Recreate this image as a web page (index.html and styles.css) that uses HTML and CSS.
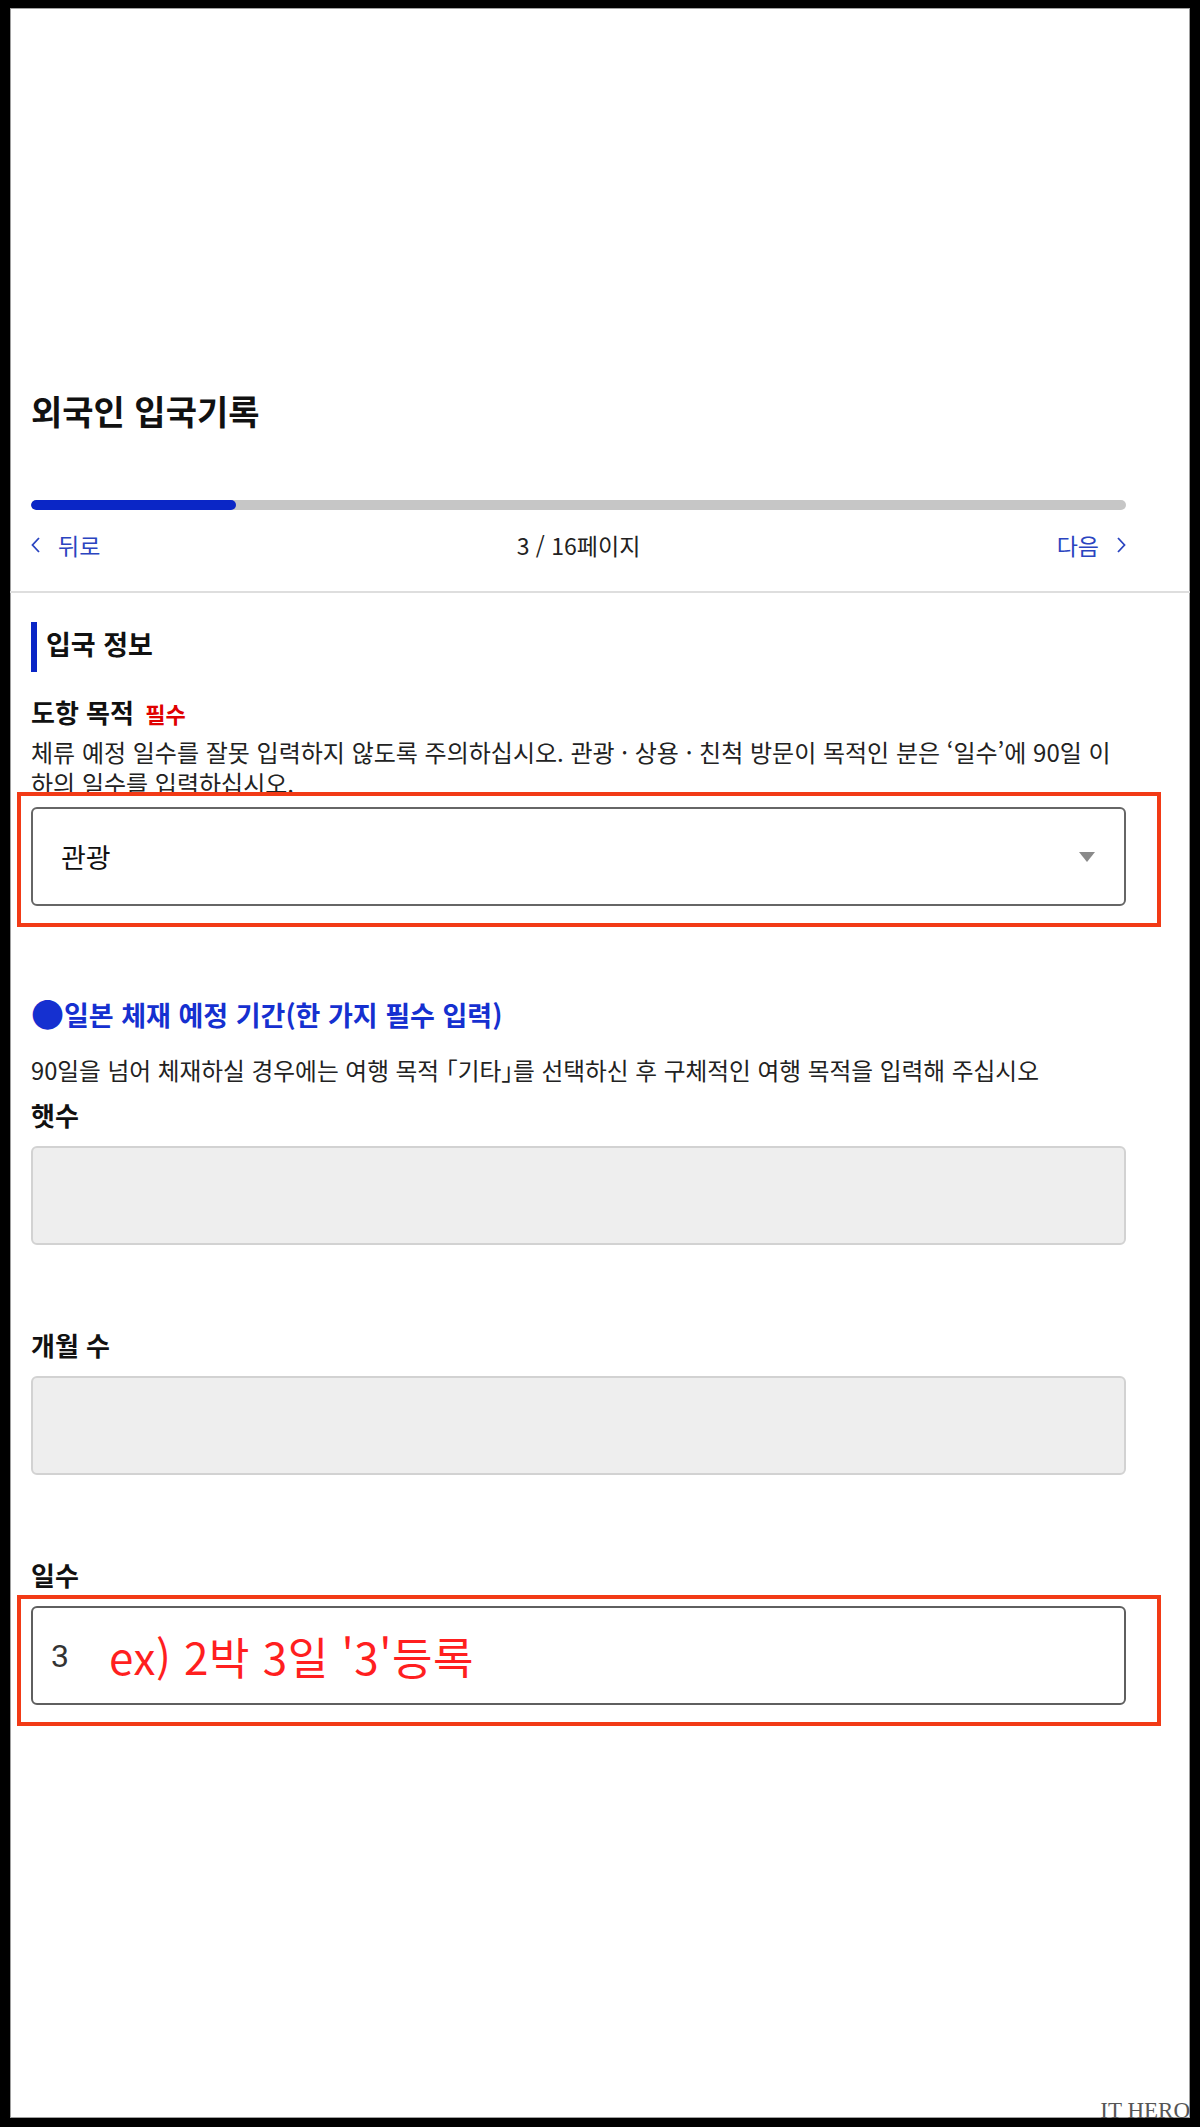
FILE: index.html
```html
<!DOCTYPE html>
<html lang="ko">
<head>
<meta charset="UTF-8">
<meta name="viewport" content="width=device-width, initial-scale=1.0">
<title>외국인 입국기록</title>
<link rel="stylesheet" href="styles.css">
</head>
<body>

<div class="screen">
    <header class="page-head">
        <h1 class="page-title">외국인 입국기록</h1>
        <div class="progress"><div class="progress-bar" style="width: 18.75%"></div></div>
        <nav class="pager">
            <a class="pager-link" href="#">
                <svg width="9" height="16" viewBox="0 0 9 16"><path d="M8 1 L1.5 8 L8 15" fill="none" stroke="currentColor" stroke-width="1.8"/></svg>
                뒤로
            </a>
            <span class="pager-count">3 / 16페이지</span>
            <a class="pager-link" href="#">
                다음
                <svg width="9" height="16" viewBox="0 0 9 16"><path d="M1 1 L7.5 8 L1 15" fill="none" stroke="currentColor" stroke-width="1.8"/></svg>
            </a>
        </nav>
    </header>

    <main class="form-body">
        <h2 class="section-title">입국 정보</h2>

        <label class="field-label purpose-label">도항 목적 <span class="required">필수</span></label>
        <p class="field-help">체류 예정 일수를 잘못 입력하지 않도록 주의하십시오. 관광 · 상용 · 친척 방문이 목적인 분은 ‘일수’에 90일 이<br>하의 일수를 입력하십시오.</p>
        <div class="mark">
            <div class="select">관광<span class="caret"></span></div>
        </div>

        <h3 class="period-title"><span class="dot">●</span>일본 체재 예정 기간(한 가지 필수 입력)</h3>
        <p class="note">90일을 넘어 체재하실 경우에는 여행 목적 <span class="bracket">「</span>기타<span class="bracket">」</span>를 선택하신 후 구체적인 여행 목적을 입력해 주십시오</p>

        <label class="field-label years-label">햇수</label>
        <div class="input"></div>

        <label class="field-label spaced">개월 수</label>
        <div class="input"></div>

        <label class="field-label spaced">일수</label>
        <div class="mark mark-tight">
            <div class="input filled">
                <span class="value">3</span>
                <span class="hint">ex) 2박 3일 '3'등록</span>
            </div>
        </div>
    </main>

    <span class="watermark">IT HERO</span>
</div>

</body>
</html>
```

FILE: styles.css
```css
body {
    margin: 0;
    background-color: #ffffff;
    font-family: "Noto Sans CJK KR", sans-serif;
    color: #111111;
}

.screen {
    position: relative;
    box-sizing: border-box;
    width: 1200px;
    height: 2127px;
    border-style: solid;
    border-color: #000000;
    border-width: 8px 10px 9px 10px;
    box-shadow: inset 0 0 0 1px #a0a0a0;
}

.page-head {
    padding: 383px 64px 31px 21px;
    border-bottom: 2px solid #dedede;
}

.page-title {
    margin: 0;
    font-size: 34px;
    line-height: 40px;
    font-weight: bold;
}

.progress {
    margin-top: 69px;
    height: 10px;
    border-radius: 5px;
    background-color: #c6c6c6;
    overflow: hidden;
}

.progress-bar {
    height: 100%;
    border-radius: 5px;
    background-color: #0a26c6;
}

.pager {
    margin-top: 20px;
    display: flex;
    justify-content: space-between;
    align-items: center;
    font-size: 23px;
    line-height: 30px;
}

.pager-link {
    display: flex;
    align-items: center;
    gap: 18px;
    color: #2a44c0;
    text-decoration: none;
}

.pager-count {
    color: #222222;
}

.form-body {
    padding: 29px 64px 0 21px;
}

.section-title {
    margin: 0;
    padding: 0 0 6px 9px;
    border-left: 6px solid #0a26c6;
    font-size: 27px;
    line-height: 44px;
    font-weight: bold;
}

.field-label {
    display: block;
    font-size: 26px;
    line-height: 32px;
    font-weight: bold;
}

.purpose-label {
    margin-top: 24px;
}

.years-label {
    margin-top: 13px;
}

.field-label.spaced {
    margin-top: 84px;
}

.required {
    margin-left: 4px;
    font-size: 22px;
    color: #e00000;
}

.field-help,
.note {
    font-size: 24px;
    line-height: 31px;
    color: #222222;
}

.field-help {
    margin: 7px 0 0;
}

.note {
    margin: 22px 0 0;
    font-size: 23.7px;
}

.bracket {
    font-feature-settings: "halt";
}

/* red annotation boxes drawn over the form */
.mark {
    position: relative;
    margin: -6px -35px 0 -14px;
    padding: 11px 31px 17px 10px;
    border: 4px solid #f23a16;
}

.mark-tight {
    margin-top: 4px;
    padding-top: 7px;
}

.select {
    box-sizing: border-box;
    height: 99px;
    display: flex;
    align-items: center;
    justify-content: space-between;
    padding: 0 29px 0 28px;
    border: 2px solid #666666;
    border-radius: 6px;
    font-size: 27px;
}

.caret {
    width: 0;
    height: 0;
    border-left: 8.5px solid transparent;
    border-right: 8.5px solid transparent;
    border-top: 10px solid #8a8a8a;
}

.period-title {
    margin: 70px 0 0;
    font-size: 27px;
    line-height: 36px;
    font-weight: bold;
    color: #1530d0;
}

.dot {
    font-size: 33px;
    line-height: 0;
    vertical-align: -1px;
}

.input {
    box-sizing: border-box;
    height: 99px;
    margin-top: 15px;
    border: 2px solid #d2d2d2;
    border-radius: 6px;
    background-color: #eeeeee;
}

.input.filled {
    margin-top: 0;
    display: flex;
    align-items: center;
    padding-left: 18px;
    border-color: #5f5f5f;
    background-color: #ffffff;
}

.value {
    font-family: Roboto, sans-serif;
    font-size: 32px;
    color: #333333;
}

.hint {
    margin-left: 40px;
    font-size: 44px;
    letter-spacing: 0.5px;
    color: #ff1f1f;
}

.watermark {
    position: absolute;
    right: 0;
    bottom: -4px;
    font-family: "Liberation Serif", serif;
    font-size: 23px;
    line-height: 22px;
    color: #555555;
}
```
